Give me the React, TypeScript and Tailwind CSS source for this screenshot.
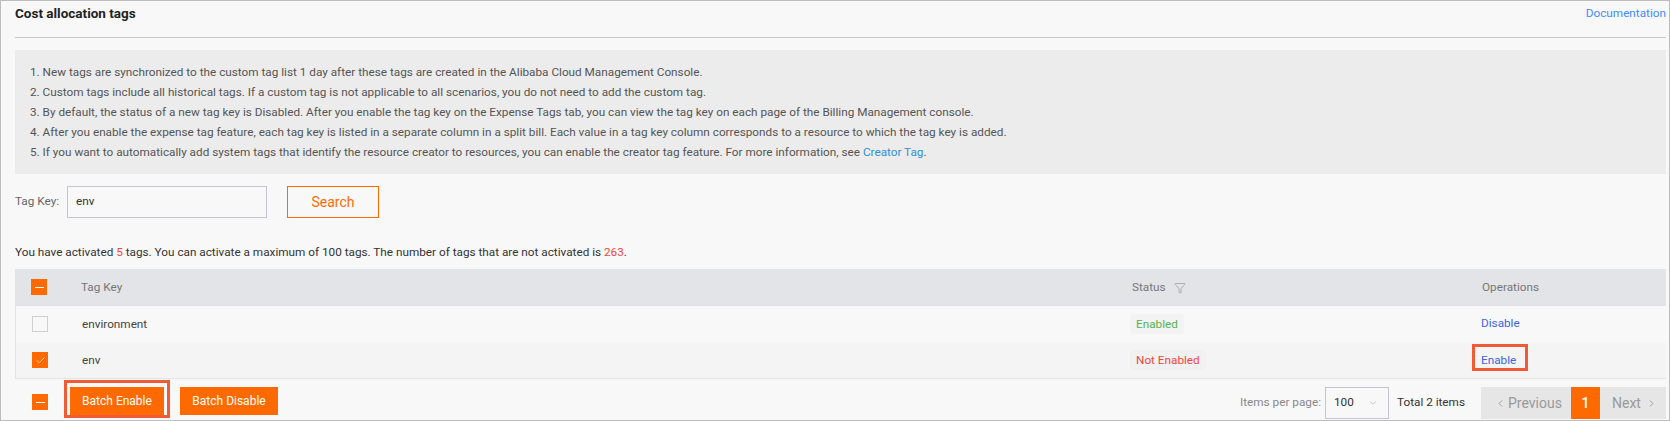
import { Check, ChevronDown, ChevronLeft, ChevronRight, Funnel } from "lucide-react";

const notes = [
  "1. New tags are synchronized to the custom tag list 1 day after these tags are created in the Alibaba Cloud Management Console.",
  "2. Custom tags include all historical tags. If a custom tag is not applicable to all scenarios, you do not need to add the custom tag.",
  "3. By default, the status of a new tag key is Disabled. After you enable the tag key on the Expense Tags tab, you can view the tag key on each page of the Billing Management console.",
  "4. After you enable the expense tag feature, each tag key is listed in a separate column in a split bill. Each value in a tag key column corresponds to a resource to which the tag key is added.",
];

const Minus = ({ className }: { className: string }) => (
  <div className={`flex size-4 items-center justify-center bg-[#ff6a00] ${className}`}>
    <div className="h-px w-[9px] bg-white"></div>
  </div>
);

export default function App() {
  return (
    <div className="h-[421px] w-[1670px] overflow-hidden border border-[#bdbdbd] bg-[#f8f8f8] pl-[14px] pr-[3px] font-['Roboto',sans-serif] text-[11.75px] text-[#333]">
      {/* header */}
      <div className="flex h-[37px] justify-between border-b border-[#c8c8c8] pt-[3px]">
        <h1 className="text-[13.5px] font-bold leading-[18px] text-[#222]">Cost allocation tags</h1>
        <a className="leading-[18px] text-[#3f8cff]">Documentation</a>
      </div>

      {/* notes */}
      <div className="mt-[12px] flex h-[124px] flex-col justify-center bg-[#ececec] pl-[15px] leading-[20px] text-[#555]">
        {notes.map(note => (
          <p key={note}>{note}</p>
        ))}
        <p>
          5. If you want to automatically add system tags that identify the resource creator to resources, you can enable the creator tag feature. For more information, see{" "}
          <a className="text-[#2f8fd8]">Creator Tag</a>.
        </p>
      </div>

      {/* search */}
      <div className="mt-[12px] flex items-center">
        <label className="w-[52px] text-[#666]">Tag Key:</label>
        <div className="flex h-[32px] w-[200px] items-center border border-[#c4c6cf] pl-[8px] text-[#333]">env</div>
        <button className="ml-[20px] h-[32px] w-[92px] border border-[#ff6a00] pb-px text-sm text-[#ff6a00]">Search</button>
      </div>

      <p className="mt-[25px] leading-[18px] text-[#333]">
        You have activated <span className="text-[#f5453c]">5</span> tags. You can activate a maximum of 100 tags. The number of tags that are not activated is <span className="text-[#f5453c]">263</span>.
      </p>

      {/* table */}
      <div className="mt-[8px] border-b border-[#e4e4e4]">
        <div className="flex h-[37px] items-center bg-[#e3e4e8] text-[#777]">
          <div className="w-[66px] pl-[16px]">
            <Minus className="-mt-[1px]" />
          </div>
          <div className="w-[1051px]">Tag Key</div>
          <div className="flex w-[350px] items-center gap-[8px]">
            Status
            <Funnel size={12} strokeWidth={1} className="text-[#777]" />
          </div>
          <div>Operations</div>
        </div>
        <div className="flex h-[36px] items-center border-l border-[#e4e4e4] text-[#444]">
          <div className="w-[66px] pl-[16px]">
            <div className="size-4 border border-[#cfcfcf]"></div>
          </div>
          <div className="w-[1048px] pt-px">environment</div>
          <div className="w-[351px]">
            <span className="inline-block rounded bg-[#f3f3f3] px-[6px] py-px leading-[18px] text-[#58b14c]">Enabled</span>
          </div>
          <a className="text-[#3c66e0]">Disable</a>
        </div>
        <div className="flex h-[36px] items-center border-l border-[#e4e4e4] bg-[#f4f4f4] text-[#444]">
          <div className="w-[66px] pl-[16px]">
            <div className="flex size-4 items-center justify-center bg-[#ff6a00]">
              <Check size={11} strokeWidth={1.5} className="text-white" />
            </div>
          </div>
          <div className="w-[1048px] pt-px">env</div>
          <div className="w-[351px]">
            <span className="inline-block rounded bg-[#f1f1f1] px-[6px] py-px leading-[18px] text-[#f5453c]">Not Enabled</span>
          </div>
          <a className="relative leading-[18px] text-[#3c66e0]">
            Enable
            <span className="absolute -top-[7px] -right-[12px] -bottom-[2px] -left-[9px] border-[3px] border-[#f05a35]"></span>
          </a>
        </div>
      </div>

      {/* footer */}
      <div className="mt-[8px] flex items-start justify-between">
        <div className="flex items-start pl-[17px]">
          <Minus className="mt-[7px]" />
          <button className="relative ml-[22px] h-[28px] w-[94px] bg-[#ff6a00] text-xs text-white">
            Batch Enable
            <span className="absolute -top-[7px] -right-[6px] -bottom-[3px] -left-[6px] border-[3px] border-[#f05a35]"></span>
          </button>
          <button className="ml-[16px] h-[28px] w-[98px] bg-[#ff6a00] text-xs text-white">Batch Disable</button>
        </div>
        <div className="flex items-center">
          <span className="text-[#888]">Items per page:</span>
          <div className="ml-[4px] flex h-[32px] w-[64px] items-center justify-between border border-[#c4c6cf] pl-[8px] pr-[10px] text-[#333]">
            100
            <ChevronDown size={10} className="text-[#bbb]" />
          </div>
          <span className="ml-[8px] w-[84px] text-[#333]">Total 2 items</span>
          <div className="flex h-[32px] items-center bg-[#e6e6e6] text-sm text-[#999]">
            <div className="flex w-[90px] items-center gap-[2px] pl-[14px]">
              <ChevronLeft size={11} />
              Previous
            </div>
            <div className="flex h-[32px] w-[29px] items-center justify-center bg-[#ff6a00] font-medium text-white">1</div>
            <div className="flex w-[66px] items-center gap-[5px] pl-[12px]">
              Next
              <ChevronRight size={11} />
            </div>
          </div>
        </div>
      </div>
    </div>
  );
}
